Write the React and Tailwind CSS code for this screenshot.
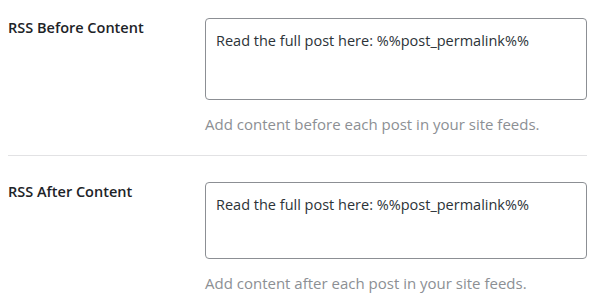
export default function App() {
  const rows = [
    { label: "RSS Before Content", desc: "Add content before each post in your site feeds.", h: "h-[82px]", pt: "pt-[18px]" },
    { label: "RSS After Content", desc: "Add content after each post in your site feeds.", h: "h-[77px]", pt: "pt-[26px]" },
  ];

  return (
    <div className="w-[600px] h-[304px] bg-white overflow-hidden" style={{ fontFamily: '"Open Sans", "Noto Sans", sans-serif' }}>
      {rows.map((r, i) => (
        <div key={r.label}>
          {i > 0 && <div className="mx-2 w-[579px] h-px bg-[#e2e2e4]" />}
          <div className={`flex ${r.pt} pb-[21px]`}>
            <div className="w-[205px] shrink-0 pl-2 text-[14.5px] leading-5 font-semibold text-[#1d2327]">
              {r.label}
            </div>
            <div className="w-[382px]">
              <div className={`${r.h} rounded border border-[#8c8f94] pt-3 pl-[10px] text-[14.5px] leading-5 text-[#2c3338]`}>
                Read the full post here: %%post_permalink%%
              </div>
              <p className="mt-[14px] text-[15px] leading-5 text-[#8c8f94]">{r.desc}</p>
            </div>
          </div>
        </div>
      ))}
    </div>
  );
}
